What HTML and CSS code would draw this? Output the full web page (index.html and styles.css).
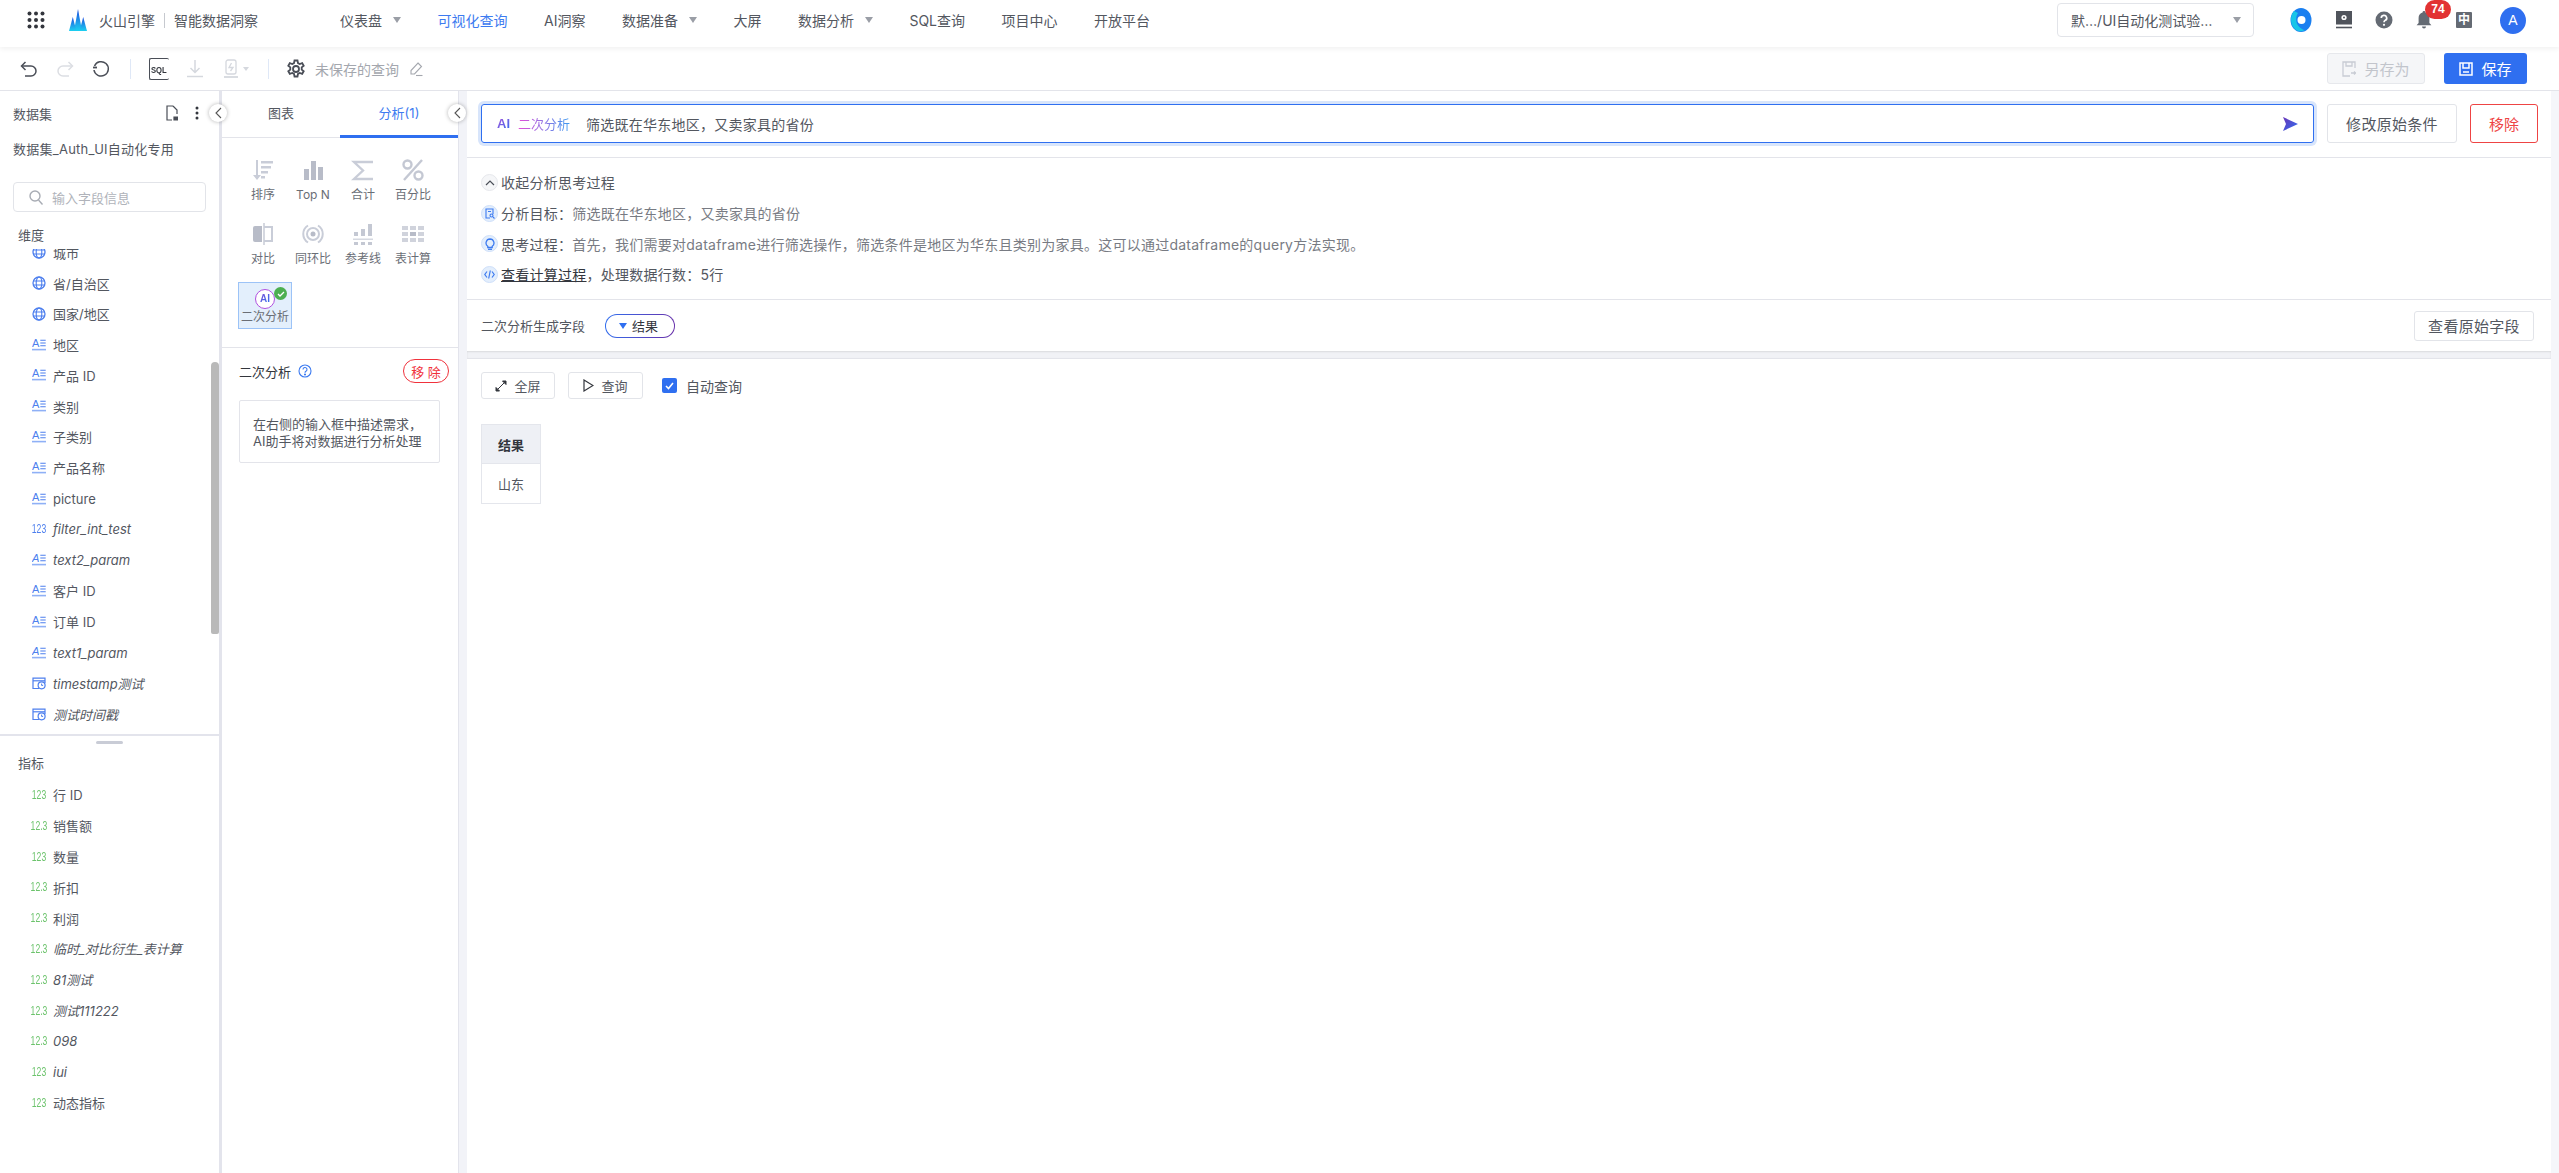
FILE: index.html
```html
<!DOCTYPE html>
<html lang="zh-CN">
<head>
<meta charset="utf-8">
<title>可视化查询</title>
<link rel="stylesheet" href="styles.css">
</head>
<body>
<svg class="defs" width="0" height="0">
  <defs>
    <linearGradient id="sendGrad" x1="0" y1="0" x2="1" y2="1"><stop offset="0" stop-color="#6a35b8"/><stop offset="1" stop-color="#2f6ff0"/></linearGradient>
    <linearGradient id="logoGrad" x1="0" y1="0" x2="0" y2="1"><stop offset="0" stop-color="#1f4fe0"/><stop offset="1" stop-color="#1cd0f0"/></linearGradient>
    <symbol id="f-text" viewBox="0 0 14 14">
      <text x="0" y="9.4" font-size="11" font-family="Liberation Sans" fill="#4d7fee">A</text>
      <path d="M8.300 2.200h5.400M8.300 5h5.400M8.300 7.800h5.400" stroke="#4d7fee" stroke-width="1.100"/>
      <path d="M0 11.600h14" stroke="#8fb0f6" stroke-width="1.600"/>
    </symbol>
    <symbol id="f-geo" viewBox="0 0 14 14">
      <circle cx="7" cy="7" r="6" fill="none" stroke="#4d7fee" stroke-width="1.300"/>
      <ellipse cx="7" cy="7" rx="2.800" ry="6" fill="none" stroke="#4d7fee" stroke-width="1.100"/>
      <path d="M1.200 5h11.600M1.200 9h11.600" stroke="#4d7fee" stroke-width="1.100"/>
    </symbol>
    <symbol id="f-time" viewBox="0 0 14 14">
      <path d="M7 12.500H1V2.200h12V7" fill="none" stroke="#4d7fee" stroke-width="1.200"/>
      <path d="M1 4.800h12" stroke="#4d7fee" stroke-width="1.200"/>
      <circle cx="9.600" cy="9.300" r="3.500" fill="#fff" stroke="#4d7fee" stroke-width="1.200"/>
      <path d="M9.600 7.600v1.800h1.500" fill="none" stroke="#4d7fee" stroke-width="1"/>
    </symbol>
  </defs>
</svg>

<div class="app">
  <header class="nav">
    <svg class="grid-icon" width="18" height="18" viewBox="0 0 18 18" fill="#33363d"><circle cx="2.500" cy="2.500" r="2"/><circle cx="9" cy="2.500" r="2"/><circle cx="15.500" cy="2.500" r="2"/><circle cx="2.500" cy="9" r="2"/><circle cx="9" cy="9" r="2"/><circle cx="15.500" cy="9" r="2"/><circle cx="2.500" cy="15.500" r="2"/><circle cx="9" cy="15.500" r="2"/><circle cx="15.500" cy="15.500" r="2"/></svg>
    <svg class="logo" width="18" height="22" viewBox="0 0 18 22"><path d="M9 0l4 22H5z" fill="url(#logoGrad)"/><path d="M3.800 8L7.400 22H0z" fill="url(#logoGrad)"/><path d="M14.200 8L18 22h-7.400z" fill="url(#logoGrad)"/></svg>
    <span class="brand">火山引擎</span>
    <i class="brand-sep"></i>
    <span class="brand-sub">智能数据洞察</span>
    <nav class="menu">
      <a class="menu-item">仪表盘<i class="caret"></i></a>
      <a class="menu-item active">可视化查询</a>
      <a class="menu-item">AI洞察</a>
      <a class="menu-item">数据准备<i class="caret"></i></a>
      <a class="menu-item">大屏</a>
      <a class="menu-item">数据分析<i class="caret"></i></a>
      <a class="menu-item">SQL查询</a>
      <a class="menu-item">项目中心</a>
      <a class="menu-item">开放平台</a>
    </nav>
    <div class="nav-right">
      <div class="project-select"><span>默…/UI自动化测试验…</span><i class="caret"></i></div>
      <span class="nav-icon first">
        <svg width="22" height="24" viewBox="0 0 22 24"><ellipse cx="11" cy="12" rx="10.500" ry="12" fill="#1a7ff0"/><path d="M4 3a10 12 0 0 0 2 19 10 12 0 0 0 9 0C9 21 3 13 8 5z" fill="#18c5e8"/><circle cx="11.500" cy="12" r="4" fill="#fff"/></svg>
      </span>
      <span class="nav-icon book">
        <svg width="18" height="18" viewBox="0 0 18 18"><rect x="1" y="0" width="16" height="13.500" fill="#50545c"/><path d="M1 16.500h16" stroke="#50545c" stroke-width="1.600"/><circle cx="9" cy="6.500" r="2.600" fill="#fff"/><circle cx="9" cy="6.500" r="1" fill="#50545c"/></svg>
      </span>
      <span class="nav-icon">
        <svg width="18" height="18" viewBox="0 0 18 18"><circle cx="9" cy="9" r="8.500" fill="#646a73"/><path d="M6.300 7a2.700 2.600 0 1 1 4 2.300c-.9.500-1.300 1-1.300 2" fill="none" stroke="#fff" stroke-width="1.700"/><circle cx="9" cy="13.800" r="1.100" fill="#fff"/></svg>
      </span>
      <span class="nav-icon bell">
        <svg width="16" height="18" viewBox="0 0 16 18"><path d="M8 0a1.400 1.400 0 0 1 1.400 1.500C12 2.200 13.400 4.300 13.400 7v5l2 2.300H.6l2-2.300V7C2.600 4.300 4 2.200 6.600 1.500A1.400 1.400 0 0 1 8 0z" fill="#646a73"/><path d="M6 15.600h4a2 2 0 0 1-4 0z" fill="#646a73"/></svg>
        <b class="badge">74</b>
      </span>
      <span class="nav-icon">
        <span class="lang">中</span>
      </span>
      <span class="avatar">A</span>
    </div>
  </header>

  <div class="toolbar">
    <svg class="tb undo" width="20" height="20" viewBox="0 0 20 20" fill="none" stroke="#4a4e57" stroke-width="1.500"><path d="M6.500 3L2.500 7l4 4"/><path d="M3 7h9a5 5 0 0 1 0 10H6"/></svg>
    <svg class="tb" width="20" height="20" viewBox="0 0 20 20" fill="none" stroke="#dcdee3" stroke-width="1.500"><path d="M13.500 3l4 4-4 4"/><path d="M17 7H8a5 5 0 0 0 0 10h6"/></svg>
    <svg class="tb" width="20" height="20" viewBox="0 0 20 20" fill="none" stroke="#4a4e57" stroke-width="1.500"><path d="M3.500 7A7.200 7.200 0 1 1 3 11"/><path d="M2 8.500h4" stroke-width="1.800"/></svg>
    <i class="tb-sep"></i>
    <span class="tb sql-icon"><span>SQL</span></span>
    <svg class="tb" width="20" height="20" viewBox="0 0 20 20" fill="none" stroke="#d5d8de" stroke-width="1.500"><path d="M10 1v12M5.500 9l4.500 4.500L14.500 9"/><path d="M2 17.500h16"/></svg>
    <svg class="tb" width="20" height="20" viewBox="0 0 20 20" fill="none" stroke="#d5d8de" stroke-width="1.300"><rect x="5" y="1" width="10" height="14" rx="2"/><path d="M10.500 4L8 8.500h4L9.500 12"/><path d="M3 18h14" stroke-width="1.800"/></svg>
    <i class="caret small"></i>
    <i class="tb-sep second"></i>
    <svg class="tb gear" width="20" height="20" viewBox="0 0 20 20" fill="none" stroke="#4a4e57" stroke-width="1.800"><circle cx="10" cy="10" r="3"/><path d="M8.500 1.500h3l.5 2.600 1.700.9 2.500-.9 1.500 2.600-2 1.700v2.200l2 1.700-1.500 2.600-2.500-.9-1.700.9-.5 2.600h-3l-.5-2.600-1.700-.9-2.500.9-1.500-2.600 2-1.700V8.400l-2-1.700 1.500-2.600 2.500.9 1.700-.9z"/></svg>
    <span class="query-name">未保存的查询</span>
    <svg class="edit" width="16" height="16" viewBox="0 0 16 16" fill="none" stroke="#a4a7ae" stroke-width="1.100"><path d="M10 2l3.500 3.500L6.500 13H3v-3.500z"/><path d="M8 14.500h6.500"/></svg>
    <div class="tb-actions">
      <button class="btn-saveas"><svg width="14" height="16" viewBox="0 0 14 16" fill="none" stroke="#c8ccd4" stroke-width="1.300"><path d="M13 7V1H1v14h7"/><path d="M4 1v4h6V1"/><path d="M9 12h4.500M12 10.500l1.500 1.500-1.500 1.500"/></svg>另存为</button>
      <button class="btn-save"><svg width="14" height="14" viewBox="0 0 14 14" fill="none" stroke="#fff" stroke-width="1.500"><path d="M1 1h12v12H1z"/><path d="M4 1v5h6V1M4 10h6"/></svg>保存</button>
    </div>
  </div>

  <main class="main">
    <aside class="fields">
      <div class="fields-head">
        <span>数据集</span>
        <svg class="file-icon" width="12" height="16" viewBox="0 0 12 16" fill="none" stroke="#4a4e57" stroke-width="1.200"><path d="M7 1H1v14h5"/><path d="M7 1l4 4v4"/><path d="M8 15h3.500v-3H8z" fill="#4a4e57"/></svg>
        <svg class="dots" width="4" height="14" viewBox="0 0 4 14" fill="#33363d"><circle cx="2" cy="2" r="1.500"/><circle cx="2" cy="7" r="1.500"/><circle cx="2" cy="12" r="1.500"/></svg>
      </div>
      <div class="dataset-name">数据集_Auth_UI自动化专用</div>
      <div class="search">
        <svg width="14" height="15" viewBox="0 0 14 15" fill="none" stroke="#a8acb4" stroke-width="1.400"><circle cx="6" cy="6" r="5"/><path d="M9.500 10l4 4.500"/></svg>
        <span>输入字段信息</span>
      </div>
      <div class="group-title dim">维度</div>
      <div class="field-scroll">
        <ul class="field-list scrolled">
          <li class="field"><svg class="ficon"><use href="#f-geo"/></svg>城市</li>
          <li class="field"><svg class="ficon"><use href="#f-geo"/></svg>省/自治区</li>
          <li class="field"><svg class="ficon"><use href="#f-geo"/></svg>国家/地区</li>
          <li class="field"><svg class="ficon"><use href="#f-text"/></svg>地区</li>
          <li class="field"><svg class="ficon"><use href="#f-text"/></svg>产品 ID</li>
          <li class="field"><svg class="ficon"><use href="#f-text"/></svg>类别</li>
          <li class="field"><svg class="ficon"><use href="#f-text"/></svg>子类别</li>
          <li class="field"><svg class="ficon"><use href="#f-text"/></svg>产品名称</li>
          <li class="field"><svg class="ficon"><use href="#f-text"/></svg>picture</li>
          <li class="field calc"><span class="num blue">123</span>filter_int_test</li>
          <li class="field calc"><svg class="ficon"><use href="#f-text"/></svg>text2_param</li>
          <li class="field"><svg class="ficon"><use href="#f-text"/></svg>客户 ID</li>
          <li class="field"><svg class="ficon"><use href="#f-text"/></svg>订单 ID</li>
          <li class="field calc"><svg class="ficon"><use href="#f-text"/></svg>text1_param</li>
          <li class="field calc"><svg class="ficon"><use href="#f-time"/></svg>timestamp测试</li>
          <li class="field calc"><svg class="ficon"><use href="#f-time"/></svg>测试时间戳</li>
        </ul>
      </div>
      <i class="handle"></i>
      <div class="group-title">指标</div>
      <ul class="field-list measures">
        <li class="field"><span class="num">123</span>行 ID</li>
        <li class="field"><span class="num">12.3</span>销售额</li>
        <li class="field"><span class="num">123</span>数量</li>
        <li class="field"><span class="num">12.3</span>折扣</li>
        <li class="field"><span class="num">12.3</span>利润</li>
        <li class="field calc"><span class="num">12.3</span>临时_对比衍生_表计算</li>
        <li class="field calc"><span class="num">12.3</span>81测试</li>
        <li class="field calc"><span class="num">12.3</span>测试111222</li>
        <li class="field calc"><span class="num">12.3</span>098</li>
        <li class="field calc"><span class="num">123</span>iui</li>
        <li class="field"><span class="num">123</span>动态指标</li>
      </ul>
      <i class="scroll-thumb"></i>
      <button class="collapse"><svg width="7" height="12" viewBox="0 0 7 12" fill="none" stroke="#555" stroke-width="1.100"><path d="M6 1L1 6l5 5"/></svg></button>
    </aside>

    <section class="config">
      <div class="tabs">
        <div class="tab">图表</div>
        <div class="tab active">分析(1)</div>
      </div>
      <div class="tools">
        <div class="tool">
          <svg width="24" height="24" viewBox="0 0 24 24" fill="#c9cdd8"><path d="M5 2h2v15h3l-4 5-4-5h3z"/><path d="M10 3h12v2.500H10zM10 8h10v2.500H10zM10 13h7v2.500h-7zM10 18h4v2.500h-4z"/></svg>
          <span>排序</span>
        </div>
        <div class="tool">
          <svg width="24" height="24" viewBox="0 0 24 24" fill="#b8bcc8"><path d="M3 11h5v11H3zM10 3h5v19h-5zM17 9h5v13h-5z"/></svg>
          <span>Top N</span>
        </div>
        <div class="tool">
          <svg width="24" height="24" viewBox="0 0 24 24" fill="none" stroke="#c9cdd8" stroke-width="2.400"><path d="M22 4H3l9 8.500L3 21h19"/></svg>
          <span>合计</span>
        </div>
        <div class="tool">
          <svg width="24" height="24" viewBox="0 0 24 24" fill="none" stroke="#c4c8d3" stroke-width="2.400"><circle cx="6.500" cy="6.500" r="4"/><circle cx="17.500" cy="17.500" r="4"/><path d="M21 2L3 22"/></svg>
          <span>百分比</span>
        </div>
        <div class="tool">
          <svg width="24" height="24" viewBox="0 0 24 24"><path d="M2 6a2 2 0 0 1 2-2h7v16H4a2 2 0 0 1-2-2z" fill="#b8bcc8"/><path d="M13 1v22" stroke="#d5d8e0" stroke-width="2"/><path d="M13 5h8v14h-8" fill="none" stroke="#c9cdd8" stroke-width="2"/></svg>
          <span>对比</span>
        </div>
        <div class="tool">
          <svg width="24" height="24" viewBox="0 0 24 24" fill="none" stroke="#c9cdd8" stroke-width="2"><path d="M7 3.500a10 10 0 0 0 0 17M17 3.500a10 10 0 0 1 0 17"/><circle cx="12" cy="12" r="6"/><circle cx="12" cy="12" r="2.500" fill="#b8bcc8" stroke="none"/></svg>
          <span>同环比</span>
        </div>
        <div class="tool">
          <svg width="24" height="24" viewBox="0 0 24 24" fill="#c4c8d3"><path d="M3 10h4v4H3zM10 7h4v7h-4zM17 2h4v12h-4zM3 20h4v3H3zM10 20h4v3h-4zM17 20h4v3h-4z"/><path d="M2 16.500h20v1.500H2z" fill="#d5d8e0"/></svg>
          <span>参考线</span>
        </div>
        <div class="tool">
          <svg width="24" height="24" viewBox="0 0 24 24" fill="#d0d3dc"><path d="M1 4h6v4H1zM9 4h6v4H9zM17 4h6v4h-6zM1 10h6v4H1zM17 10h6v4h-6zM1 16h6v4H1zM9 16h6v4H9zM17 16h6v4h-6z"/><path d="M9 10h6v4H9z" fill="#b8bcc8"/></svg>
          <span>表计算</span>
        </div>
        <div class="tool ai-tool">
          <span class="ai-ring"><span>AI</span></span>
          <span class="ai-check"><svg width="8" height="6" viewBox="0 0 8 6" fill="none" stroke="#fff" stroke-width="1.300"><path d="M1 3l2 2 4-4"/></svg></span>
          <span>二次分析</span>
        </div>
      </div>
      <div class="config-head">
        <span>二次分析</span>
        <svg class="help" width="14" height="14" viewBox="0 0 14 14" fill="none" stroke="#3d7bf0" stroke-width="1.100"><circle cx="7" cy="7" r="6"/><path d="M5 5.500a2 2 0 1 1 3 1.700c-.7.400-1 .8-1 1.500"/><circle cx="7" cy="10.500" r=".5"/></svg>
        <button class="pill-remove">移 除</button>
      </div>
      <div class="hint">在右侧的输入框中描述需求，<br>AI助手将对数据进行分析处理</div>
      <button class="collapse"><svg width="7" height="12" viewBox="0 0 7 12" fill="none" stroke="#555" stroke-width="1.100"><path d="M6 1L1 6l5 5"/></svg></button>
    </section>

    <section class="result">
      <div class="ask-row">
        <div class="ask">
          <b class="ai-mark">AI</b>
          <span class="ai-label">二次分析</span>
          <span class="ask-text">筛选既在华东地区，又卖家具的省份</span>
          <svg class="send" width="16" height="16" viewBox="0 0 16 16"><path d="M1 1l15 7-15 7 3-7z" fill="url(#sendGrad)"/></svg>
        </div>
        <button class="btn">修改原始条件</button>
        <button class="btn danger">移除</button>
      </div>
      <div class="thinking">
        <div class="think-row dark">
          <span class="bubble grey"><svg width="10" height="7" viewBox="0 0 10 7" fill="none" stroke="#4a4e57" stroke-width="1.200"><path d="M1 6l4-4 4 4"/></svg></span>
          收起分析思考过程
        </div>
        <div class="think-row">
          <span class="bubble"><svg width="10" height="11" viewBox="0 0 10 11" fill="none" stroke="#3d7bf0" stroke-width="1.100"><path d="M5 10H1V1h7v5"/><circle cx="6.500" cy="7.500" r="1.500"/><path d="M8 9l1.500 1.500M3 3.500h3"/></svg></span>
          <em>分析目标：</em>筛选既在华东地区，又卖家具的省份
        </div>
        <div class="think-row">
          <span class="bubble"><svg width="10" height="12" viewBox="0 0 10 12" fill="none" stroke="#3d7bf0" stroke-width="1.300"><path d="M5 1a4 4 0 0 1 2.200 7.300V9.500H2.800V8.300A4 4 0 0 1 5 1z"/><path d="M3 11.300h4"/></svg></span>
          <em>思考过程：</em>首先，我们需要对dataframe进行筛选操作，筛选条件是地区为华东且类别为家具。这可以通过dataframe的query方法实现。
        </div>
        <div class="think-row">
          <span class="bubble"><svg width="11" height="9" viewBox="0 0 11 9" fill="none" stroke="#3d7bf0" stroke-width="1.200"><path d="M3 1.500L.8 4.500 3 7.500M8 1.500l2.200 3L8 7.500M6.300 .5L4.700 8.500"/></svg></span>
          <em class="link">查看计算过程</em><em>，处理数据行数：5行</em>
        </div>
      </div>
      <div class="gen-row">
        <span class="gen-label">二次分析生成字段</span>
        <span class="gen-pill"><i class="tri"></i>结果</span>
        <button class="btn slim">查看原始字段</button>
      </div>
      <div class="band"></div>
      <div class="query-row">
        <button class="btn-mini w74"><svg width="12" height="12" viewBox="0 0 12 12" fill="#33363d"><path d="M7.500 1H11v3.500zM1 7.500L4.500 11H1zM9 3l-6 6" stroke="#33363d"/></svg>全屏</button>
        <button class="btn-mini w75"><svg width="11" height="13" viewBox="0 0 11 13" fill="none" stroke="#33363d" stroke-width="1.200"><path d="M1 1l9 5.500L1 12z"/></svg>查询</button>
        <span class="checkbox"><svg width="9" height="8" viewBox="0 0 9 8" fill="none" stroke="#fff" stroke-width="1.600"><path d="M1 4l2.500 2.500L8 1"/></svg></span>
        <span class="check-label">自动查询</span>
      </div>
      <table class="data-table">
        <thead><tr><th>结果</th></tr></thead>
        <tbody><tr><td>山东</td></tr></tbody>
      </table>
    </section>
    <div class="track"></div>
  </main>
</div>
</body>
</html>
```
FILE: styles.css
```css
* { box-sizing: border-box; }
html, body { margin: 0; padding: 0; height: 100%; overflow: hidden; }
body {
  font-family: Inter, "Noto Sans CJK SC", sans-serif;
  font-size: 14px;
  color: #53575f;
  background: #fff;
}
ul { list-style: none; margin: 0; padding: 0; }
button { font-family: inherit; cursor: pointer; background: #fff; }
.defs { position: absolute; }
.app { height: 100vh; display: flex; flex-direction: column; }

/* top nav */
.nav {
  height: 47px; flex: none; display: flex; align-items: center; padding: 0 33px 7px 27px;
  background: #fff; box-shadow: 0 2px 5px rgba(0, 0, 0, .06); position: relative; z-index: 2;
}
.logo { margin-left: 24px; }
.brand { margin-left: 12px; }
.brand-sep { width: 1px; height: 15px; background: #c6c9cf; margin: 0 9px; }
.menu { display: flex; align-items: center; gap: 36.5px; margin-left: 82px; }
.menu-item { display: flex; align-items: center; white-space: nowrap; }
.menu-item.active { color: #3d7bf0; }
.caret {
  display: block; width: 0; height: 0; margin-left: 11px;
  border-left: 4px solid transparent; border-right: 4px solid transparent; border-top: 6px solid #9a9ea6;
}
.nav-right { display: flex; align-items: center; margin-left: auto; }
.project-select {
  width: 197px; height: 34px; border: 1px solid #e2e4e9; border-radius: 4px; display: flex; align-items: center;
  padding: 0 12px 0 13px; justify-content: space-between; white-space: nowrap;
}
.nav-icon { width: 40px; height: 26px; display: flex; align-items: center; justify-content: center; position: relative; }
.nav-icon.first { margin-left: 27px; }
.nav-icon.book { margin-left: 3px; }
.badge {
  position: absolute; left: 21px; top: -7px; width: 26px; height: 19px; border-radius: 10px; background: #e23232;
  color: #fff; font: 700 12px/19px "Liberation Sans", sans-serif; text-align: center;
}
.lang {
  width: 16px; height: 16px; background: #646a73; color: #fff; font-size: 12px; line-height: 16px; text-align: center;
  border-radius: 1px; font-weight: 700;
}
.avatar {
  width: 26px; height: 27px; border-radius: 50%; background: #2f6ff0; color: #fff; margin-left: 16px;
  display: flex; align-items: center; justify-content: center; font: 400 14px "Liberation Sans", sans-serif;
}

/* toolbar */
.toolbar {
  height: 44px; flex: none; display: flex; align-items: center; padding: 0 32px 0 19px;
  border-bottom: 1px solid #e3e4ea; background: #fff;
}
.tb { flex: none; }
.tb + .tb { margin-left: 16px; }
.tb-sep { width: 1px; height: 20px; background: #dfe8f7; margin: 0 18px 0 19px; flex: none; }
.tb-sep.second { margin-left: 19px; margin-right: 17px; }
.tb-sep + .tb { margin-left: 0; }
.sql-icon {
  width: 20px; height: 22px; border: 1.500px solid #4a4e57; border-right: 0; border-radius: 2px; position: relative; display: block;
}
.sql-icon span {
  position: absolute; left: 1px; top: 5px; background: #fff; font: 700 9px/12px "Liberation Sans", sans-serif; color: #33363d;
  transform: scaleX(.85); transform-origin: left;
}
.caret.small { margin-left: 2px; border-left-width: 3px; border-right-width: 3px; border-top: 4px solid #d5d8de; }
.query-name { margin-left: 9px; color: #a4a7ae; }
.edit { margin-left: 9px; }
.tb-actions { margin-left: auto; display: flex; gap: 19px; }
.btn-saveas, .btn-save {
  height: 31px; border-radius: 3px; display: flex; align-items: center; justify-content: center; gap: 8px; font-size: 15px; padding: 0;
}
.btn-saveas { width: 98px; background: #f5f6f8; border: 1px solid #e6e8ec; color: #c2c5cc; }
.btn-save { width: 83px; background: #2f6ff0; border: 0; color: #fff; }

/* main */
.main { flex: 1; display: flex; min-height: 0; background: #f2f3f8; }

/* fields panel */
.fields { width: 222px; flex: none; border-right: 3px solid #e3e4ec; position: relative; background: #fff; }
.fields-head { height: 44px; display: flex; align-items: center; padding-left: 13px; font-size: 13px; }
.file-icon { margin-left: auto; }
.dots { margin: 0 20px 0 17px; }
.dataset-name { padding: 5px 0 5px 13px; line-height: 18px; font-size: 13px; white-space: nowrap; letter-spacing: .25px; }
.search {
  margin: 19px 0 0 13px; width: 193px; height: 30px; border: 1px solid #e2e4e9; border-radius: 4px;
  display: flex; align-items: center; padding-left: 15px; gap: 9px; font-size: 13px; color: #b0b3ba;
}
.group-title { height: 22px; line-height: 22px; padding-left: 18px; font-size: 13px; margin-top: 8px; }
.group-title.dim { margin-top: 12px; }
.field-scroll { margin-top: 3px; height: 487px; overflow: hidden; border-bottom: 2px solid #e3e4ec; }
.field-list.scrolled { margin-top: -12.2px; }
.field-list.measures { margin-top: 5.6px; }
.field { height: 30.8px; display: flex; align-items: center; padding-left: 32px; font-size: 13px; white-space: nowrap; }
.field.calc { font-style: italic; }
.ficon { width: 14px; height: 14px; flex: none; margin-right: 7px; }
.num {
  width: 14px; margin-right: 7px; flex: none; font: normal 400 12px/14px "Liberation Sans", sans-serif; color: #6cc36c;
  transform: scaleX(.72); transform-origin: center; white-space: nowrap; display: flex; justify-content: center;
}
.num.blue { color: #4d7fee; }
.handle { display: block; width: 27px; height: 3px; border-radius: 2px; background: #c9ccd6; margin: 5px 0 0 96px; }
.scroll-thumb { position: absolute; left: 211px; top: 271px; width: 8px; height: 272px; background: #b9b9b9; border-radius: 4px 4px 2px 2px; }
.collapse {
  position: absolute; top: 13px; width: 18px; height: 18px; border-radius: 50%; padding: 0; background: #fff; border: 0;
  box-shadow: 0 0 4px rgba(0, 0, 0, .3); display: flex; align-items: center; justify-content: center; z-index: 3;
}
.fields > .collapse { left: 209px; }
.config > .collapse { left: 226px; }

/* config panel */
.config { width: 237px; flex: none; border-right: 1px solid #e3e4ec; position: relative; background: #fff; }
.tabs { display: grid; grid-template-columns: 1fr 1fr; height: 47px; border-bottom: 1px solid #e3e4ea; }
.tab { text-align: center; line-height: 45px; font-size: 13px; }
.tab.active { color: #3d7bf0; border-bottom: 3px solid #2f6ff0; height: 47px; }
.tools {
  display: grid; grid-template-columns: repeat(4, 50px); grid-template-rows: 64px 64px auto; padding: 20px 0 18px 16px;
  border-bottom: 1px solid #e3e4ea;
}
.tool { display: flex; flex-direction: column; align-items: center; gap: 5px; font-size: 12px; line-height: 16px; color: #6a6e76; white-space: nowrap; }
.ai-tool {
  height: 47px; width: 54px; margin: -4px 0 0 0; padding-top: 6px; gap: 0; background: #e3effc; border: 1px solid #9cc3f7;
  position: relative;
}
.ai-ring {
  width: 20px; height: 20px; border-radius: 50%; border: 1px solid #b050e0; background: #fff; display: flex; align-items: center; justify-content: center;
}
.ai-ring span {
  font: 700 10px/1 "Liberation Sans", sans-serif; background: linear-gradient(135deg, #7a55d8, #2f6ff0);
  -webkit-background-clip: text; background-clip: text; color: transparent;
}
.ai-check {
  position: absolute; left: 35px; top: 4px; width: 13px; height: 13px; border-radius: 50%; background: #4caf50;
  display: flex; align-items: center; justify-content: center;
}
.config-head { display: flex; align-items: center; padding: 11px 9px 0 17px; font-size: 13px; color: #33363d; }
.help { margin-left: 7px; }
.pill-remove {
  margin-left: auto; width: 46px; height: 24px; border: 1px solid #f0323c; border-radius: 12px; color: #f0323c; font-size: 13px; padding: 0; background: #fff;
}
.hint {
  margin: 17px 18px 0 17px; height: 63px; border: 1px solid #e3e4ea; border-radius: 2px; padding: 15px 0 0 13px;
  font-size: 13px; line-height: 17px; white-space: nowrap;
}

/* result */
.result { flex: 1; min-width: 0; margin-left: 8px; background: #fff; position: relative; }
.track { width: 8px; flex: none; background: #f5f6fa; }
.ask-row { display: flex; gap: 13px; padding: 13px 13px 13px 14px; height: 67px; border-bottom: 1px solid #e3e4ea; }
.ask {
  flex: 1; height: 39px; border: 1px solid #2f6ff0; border-radius: 3px; box-shadow: 0 0 0 3px #d8e5fb; display: flex; align-items: center; padding: 0 15px;
}
.ai-mark {
  font: 700 13px "Liberation Sans", sans-serif; background: linear-gradient(135deg, #b04fd8, #2f6ff0);
  -webkit-background-clip: text; background-clip: text; color: transparent;
}
.ai-label {
  margin-left: 8px; font-size: 13px; background: linear-gradient(90deg, #e24fd8, #3d9bf0);
  -webkit-background-clip: text; background-clip: text; color: transparent;
}
.ask-text { margin-left: 16px; letter-spacing: .25px; }
.send { margin-left: auto; }
.btn { height: 39px; width: 130px; border: 1px solid #e2e4e9; border-radius: 3px; font-size: 15px; letter-spacing: .3px; color: #53575f; padding: 0; }
.btn.danger { width: 68px; border-color: #ee4444; color: #ee4444; letter-spacing: 0; }
.btn.slim { height: 30px; width: 120px; margin-left: auto; }
.thinking { height: 142px; padding-top: 9px; border-bottom: 1px solid #e3e4ea; }
.think-row { height: 30.7px; display: flex; align-items: center; padding-left: 14px; color: #787b83; white-space: nowrap; letter-spacing: .25px; }
.think-row em { font-style: normal; color: #53575f; }
.think-row.dark { color: #53575f; }
.think-row em.link { color: #33363d; text-decoration: underline; }
.bubble {
  width: 17px; height: 17px; border-radius: 50%; background: #e3eefc; border: 1px solid #cfe0fa; display: flex; align-items: center; justify-content: center;
  margin-right: 3px; flex: none;
}
.bubble.grey { background: #f5f6f8; border-color: #e6e8ec; }
.gen-row { height: 51px; display: flex; align-items: center; padding: 0 17px 0 14px; font-size: 13px; }
.gen-pill {
  margin-left: 20px; width: 70px; height: 24px; border-radius: 12px; border: 1px solid transparent; display: flex; align-items: center; padding-left: 13px; gap: 5px; color: #33363d;
  background: linear-gradient(#fff, #fff) padding-box, linear-gradient(100deg, #2f6ff0, #6a2fa8) border-box;
}
.tri { width: 0; height: 0; border-left: 4.500px solid transparent; border-right: 4.500px solid transparent; border-top: 6px solid #2f6ff0; }
.band { height: 8px; background: #f1f2f6; box-shadow: inset 0 1px 2px rgba(0, 0, 0, .1); border-bottom: 1px solid #e3e4ea; }
.query-row { display: flex; align-items: center; padding: 13px 0 0 14px; }
.btn-mini {
  height: 27px; border: 1px solid #e2e4e9; border-radius: 3px; display: flex; align-items: center; justify-content: center; gap: 7px; font-size: 13px; color: #53575f; padding: 0;
}
.w74 { width: 74px; }
.w75 { width: 75px; margin-left: 13px; }
.checkbox { width: 15px; height: 15px; margin-left: 19px; background: #2f6ff0; border-radius: 2px; display: flex; align-items: center; justify-content: center; }
.check-label { margin-left: 9px; }
.data-table { margin: 25px 0 0 14px; border-collapse: collapse; width: 60px; font-size: 13px; }
.data-table th { height: 39px; background: #eef0f5; border: 1px solid #e4e6ec; color: #33363d; font-weight: 700; padding: 0; }
.data-table td { height: 40px; border: 1px solid #e4e6ec; text-align: center; padding: 0; }
```
